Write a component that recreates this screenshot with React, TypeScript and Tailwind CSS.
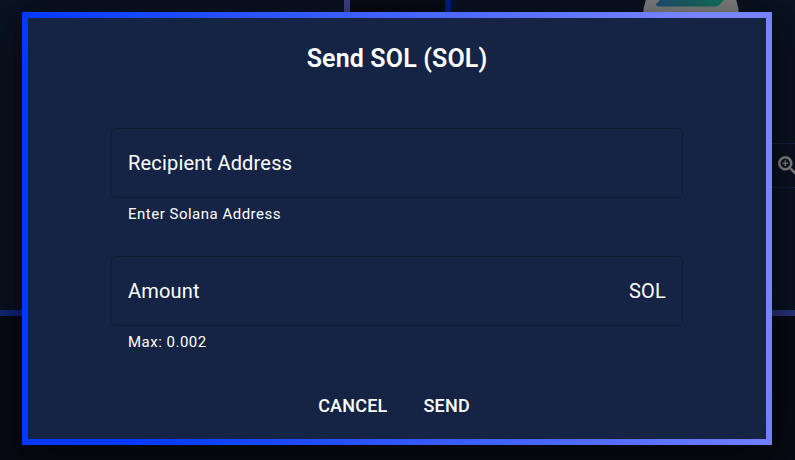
import React from "react";

type FieldProps = {
  label: string;
  helper: string;
  suffix?: string;
};

function Field({ label, helper, suffix }: FieldProps) {
  return (
    <div className="w-[572px]">
      <div className="flex h-[70px] items-center justify-between rounded-[5px] border border-[#101c34] px-4 text-[20px] leading-6 tracking-[0.19px]">
        <span>{label}</span>
        {suffix && <span>{suffix}</span>}
      </div>
      <p className="mt-[4px] pl-[17px] text-[15px] font-[450] leading-[25px] tracking-[0.5px]">{helper}</p>
    </div>
  );
}

function TokenLogo() {
  return (
    <svg className="absolute left-[192px] top-[-32px]" width="96" height="96" viewBox="0 0 96 96">
      <defs>
        <linearGradient id="token" x1="0" x2="1">
          <stop offset="0" stopColor="#24547a" />
          <stop offset="0.6" stopColor="#1a6c66" />
          <stop offset="1" stopColor="#0b806a" />
        </linearGradient>
      </defs>
      <circle cx="48" cy="48" r="48" fill="#858585" />
      <path d="M23 26H87L76 37.3Q74.5 38.6 72.5 38.6H15Q12 38 13.5 35.5Z" fill="url(#token)" />
    </svg>
  );
}

function Backdrop() {
  return (
    <div className="flex h-[460px] w-[795px] flex-col bg-[#080c14]">
      <div className="flex h-[316px] justify-between">
        <div className="w-[350px] border-b-[6px] border-r-[6px] border-b-[#122780] border-r-[#43448a] bg-[#0b1424]" />
        <div className="relative w-[350px] overflow-hidden border-b-[6px] border-l-[6px] border-b-[#2b3580] border-l-[#001e90] bg-[#0b1424]">
          <TokenLogo />
          <div className="mt-[143px] flex h-[45px] items-center justify-end border-y border-[#16223f]">
            <svg className="-mr-[6px]" width="26" height="26" viewBox="0 0 24 24" fill="#8f8d8b" stroke="#8f8d8b" strokeWidth="0.3">
              <path d="M15.5 14h-.79l-.28-.27C15.41 12.59 16 11.11 16 9.5 16 5.91 13.09 3 9.5 3S3 5.91 3 9.5 5.91 16 9.5 16c1.61 0 3.09-.59 4.23-1.57l.27.28v.79l5 4.99L20.49 19l-4.99-5zm-6 0C7.01 14 5 11.99 5 9.5S7.01 5 9.5 5 14 7.01 14 9.5 11.99 14 9.5 14zm.5-7H9v2H7v1h2v2h1v-2h2V9h-2V7z" />
            </svg>
          </div>
        </div>
      </div>
    </div>
  );
}

export default function App() {
  return (
    <main className="relative h-[460px] w-[795px] overflow-hidden font-['Roboto',sans-serif] text-white">
      <Backdrop />
      <section className="absolute left-[22px] top-[12px] h-[433px] w-[750px] bg-[linear-gradient(75deg,#0038ff_12%,#7884ff_92%)] p-[6px] shadow-[0_11px_15px_-7px_rgba(0,0,0,0.2),0_24px_38px_3px_rgba(0,0,0,0.14),0_9px_46px_8px_rgba(0,0,0,0.4)]">
        <div className="flex h-full flex-col items-center bg-[#152444] pt-[25px]">
          <h1 className="text-[25px] font-semibold leading-8 tracking-[0.15px]">Send SOL (SOL)</h1>
          <div className="mt-[53px] flex flex-col gap-[29px]">
            <Field label="Recipient Address" helper="Enter Solana Address" />
            <Field label="Amount" helper="Max: 0.002" suffix="SOL" />
          </div>
          <div className="mt-[35px] flex gap-[36px] pr-[6px] text-[18px] font-[550] leading-8 tracking-[0.2px]">
            <button>CANCEL</button>
            <button>SEND</button>
          </div>
        </div>
      </section>
    </main>
  );
}
